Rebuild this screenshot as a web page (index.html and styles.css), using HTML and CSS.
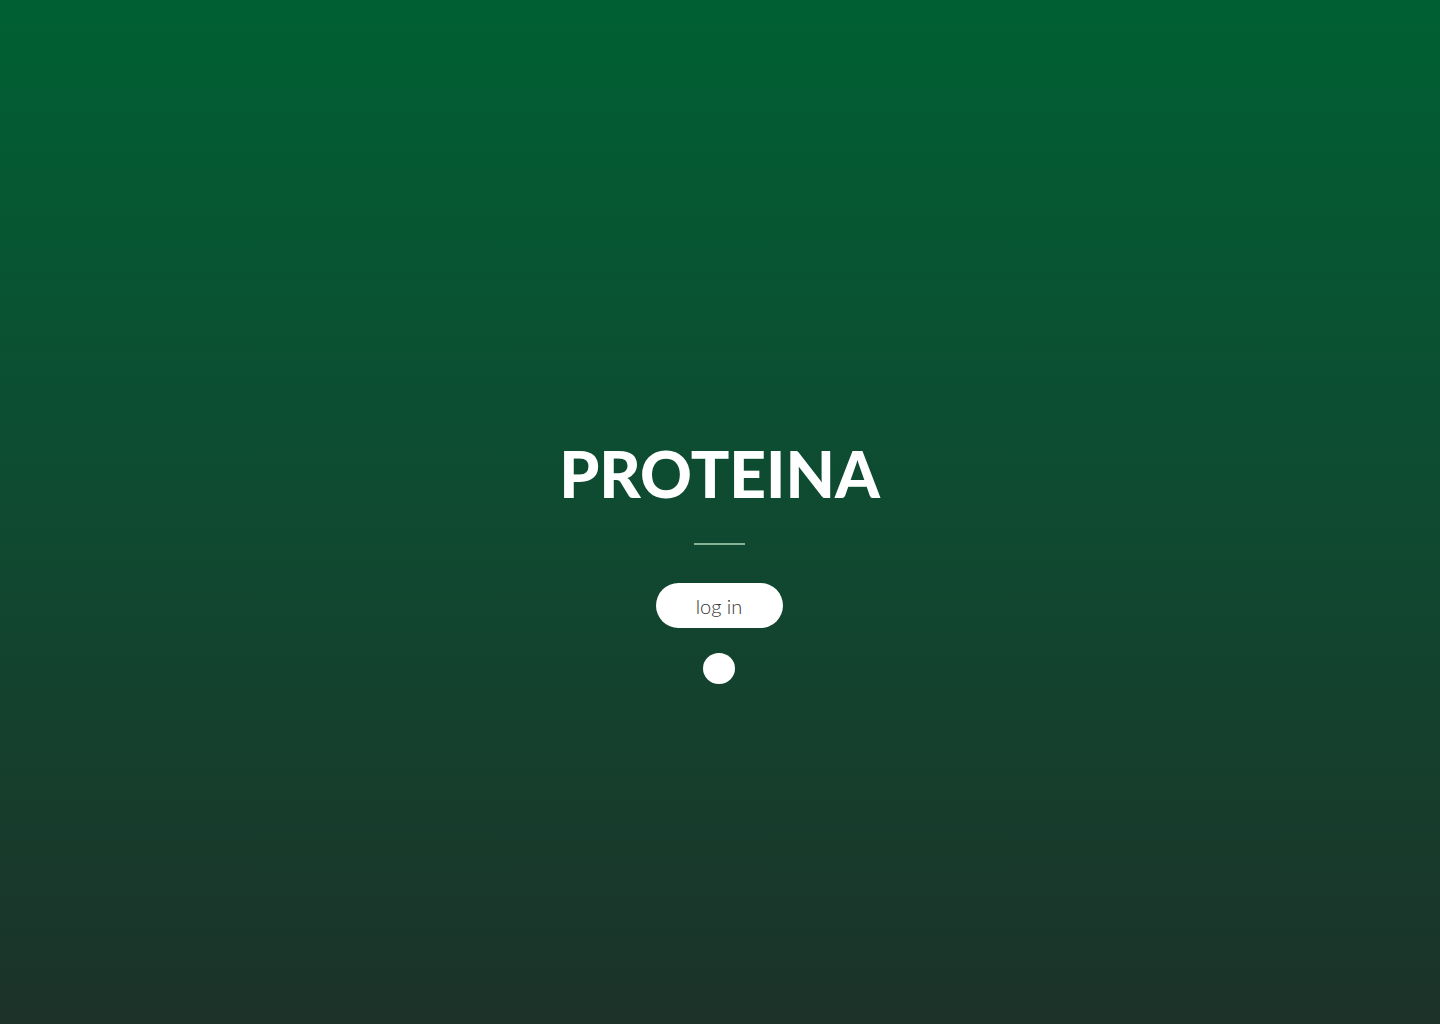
FILE: index.html
```html
<!DOCTYPE html>
<html lang="en">
<head>
<meta charset="utf-8">
<title>Proteina</title>
<link rel="stylesheet" href="styles.css">
</head>
<body>
<main class="screen">
  <h1 class="brand">PROTEINA</h1>
  <div class="divider"></div>
  <button class="login">log in</button>
  <div class="dot"></div>
</main>
</body>
</html>
```
FILE: styles.css
```css
html, body {
  margin: 0;
  padding: 0;
  height: 100%;
}
body {
  background: linear-gradient(180deg, #006033 0%, #0f4a31 50%, #1c3229 100%);
  font-family: Lato, "Open Sans", sans-serif;
}
.screen {
  height: 1024px;
  display: flex;
  flex-direction: column;
  align-items: center;
  padding-top: 437px;
  box-sizing: border-box;
}
.brand {
  margin: 0 0 0 -1px;
  color: #fff;
  font-family: Lato, sans-serif;
  font-weight: 900;
  font-size: 64px;
  line-height: 74px;
  letter-spacing: 0;
}
.divider {
  width: 51px;
  height: 2px;
  background: #86b394;
  margin-top: 32px;
  margin-left: -1px;
}
.login {
  margin-top: 38px;
  margin-left: -2px;
  width: 127px;
  height: 45px;
  border: none;
  border-radius: 23px;
  background: #fff;
  color: #333333;
  font-family: Lato, sans-serif;
  font-weight: 300;
  font-size: 20px;
  padding: 0;
  cursor: pointer;
}
.dot {
  margin-top: 25px;
  margin-left: -2px;
  width: 32px;
  height: 31px;
  border-radius: 50%;
  background: #fff;
}
```
